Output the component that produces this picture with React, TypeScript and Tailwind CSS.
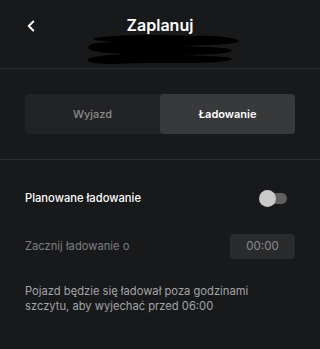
import { ChevronLeft } from 'lucide-react';

export default function App() {
  return (
    <div
      className="w-[320px] h-[349px] overflow-hidden bg-[#18191b] text-white"
      style={{ fontFamily: 'Inter, "Noto Sans", sans-serif' }}
    >
      {/* header */}
      <div className="relative h-[69px] border-b border-[#2e2f31]">
        <div className="flex items-center h-[52px] px-[22px]">
          <ChevronLeft size={18} strokeWidth={2.6} className="text-white" />
        </div>
        <div className="absolute left-0 right-0 top-[13px] text-center text-[16px] font-semibold leading-[24px]">
          Zaplanuj
        </div>
        {/* zamazany podtytuł */}
        <svg className="absolute left-[84px] top-[32px]" width="158" height="34" viewBox="0 0 158 34">
          <path
            d="M10 6 C40 2 80 3 110 4 C130 3 150 5 155 9 C152 13 120 13 100 14 C120 15 140 15 148 18 C146 23 120 22 100 23 C120 24 145 24 148 27 C140 32 100 31 60 31 C30 32 10 33 4 29 C2 25 20 23 40 22 C20 21 5 20 4 15 C6 10 20 11 30 10 C20 9 8 9 10 6 Z"
            fill="#000"
          />
        </svg>
      </div>

      {/* przełącznik */}
      <div className="px-[25px] pt-[25px] pb-[25px] border-b border-[#2e2f31]">
        <div className="flex h-[40px] rounded-[4px] bg-[#222325]">
          <button className="flex-1 text-[11px] font-medium text-[#8a8b8d]">Wyjazd</button>
          <button className="flex-1 rounded-[4px] bg-[#38393b] text-[11px] font-semibold text-white">
            Ładowanie
          </button>
        </div>
      </div>

      {/* ustawienia */}
      <div className="px-[25px] pt-[28px]">
        <div className="flex items-center justify-between h-[20px]">
          <span className="text-[11.2px] font-medium text-white">Planowane ładowanie</span>
          <div className="relative w-[28px] h-[17px] mr-[8px] flex items-center">
            <div className="absolute left-[4px] right-0 h-[11px] rounded-full bg-[#5f6062]" />
            <div className="absolute left-0 w-[17px] h-[17px] rounded-full bg-[#c9c9ca]" />
          </div>
        </div>
        <div className="flex items-center justify-between mt-[26px]">
          <span className="text-[11.2px] text-[#7d7e80]">Zacznij ładowanie o</span>
          <div className="w-[65px] h-[25px] rounded-[4px] bg-[#2a2b2d] flex items-center justify-center text-[11.5px] text-[#8a8b8d]">
            00:00
          </div>
        </div>
        <p className="mt-[25px] text-[11.2px] leading-[15px] text-[#a3a4a6]">
          Pojazd będzie się ładował poza godzinami
          <br />
          szczytu, aby wyjechać przed 06:00
        </p>
      </div>
    </div>
  );
}
